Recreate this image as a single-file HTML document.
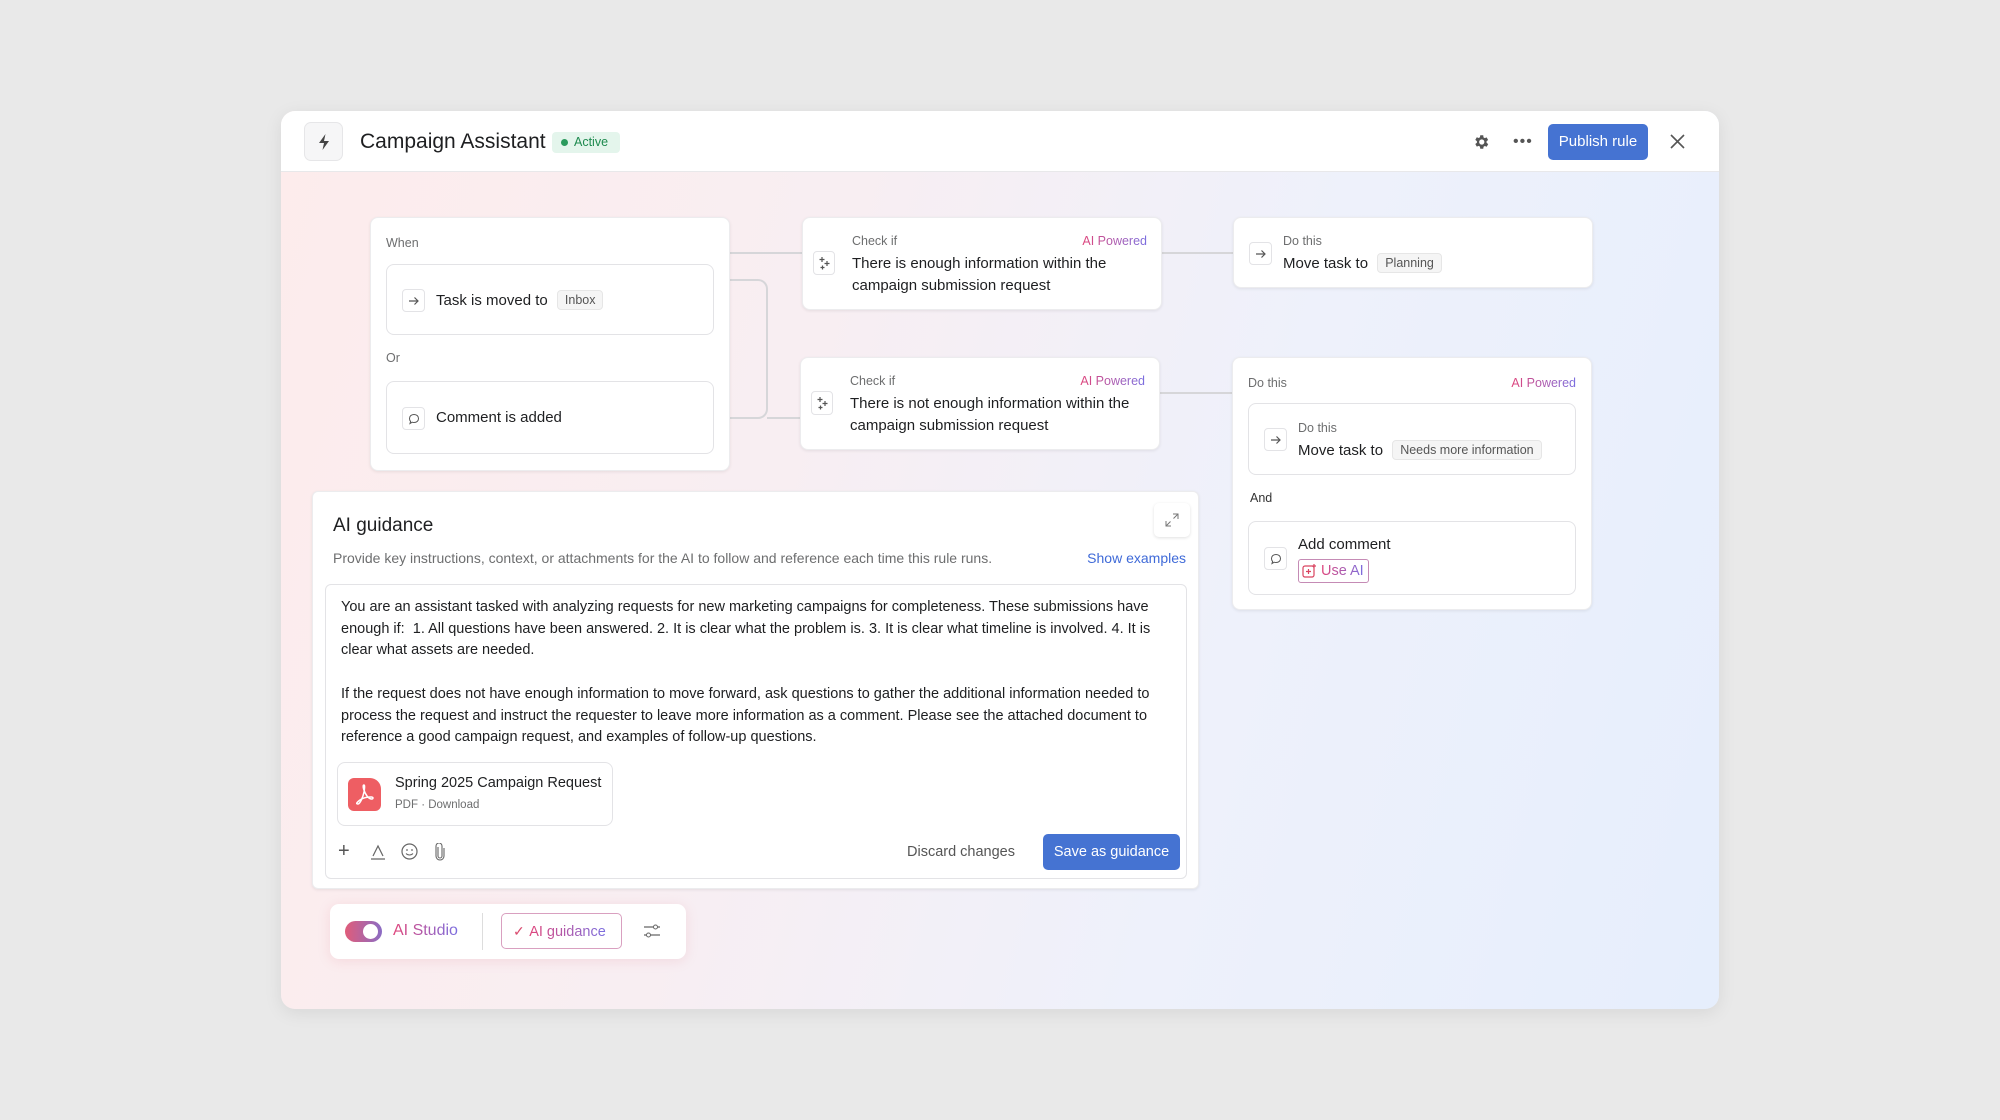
<!DOCTYPE html>
<html><head><meta charset="utf-8"><style>
*{box-sizing:border-box;margin:0;padding:0}
body{width:2000px;height:1120px;background:#e9e9e9;font-family:"Liberation Sans",sans-serif;color:#1e1f21;position:relative;overflow:hidden}
.a{position:absolute}
.main{left:281px;top:111px;width:1438px;height:898px;border-radius:14px;overflow:hidden;background:linear-gradient(105deg,#fdecec 0%,#f8eef2 35%,#eef1fb 65%,#e6eefc 100%);box-shadow:0 4px 18px rgba(0,0,0,.08)}
.hdr{left:0;top:0;width:1438px;height:61px;background:#fff;border-bottom:1px solid #e8e8ea}
.card{background:#fff;border-radius:8px;box-shadow:0 1px 3px rgba(0,0,0,.08);border:1px solid #ececee}
.ib{border:1px solid #e3e3e6;border-radius:8px;background:#fff}
.ico{width:23px;height:23px;border:1px solid #e3e3e6;border-radius:4px;display:flex;align-items:center;justify-content:center;background:#fff}
.lbl{font-size:12.5px;color:#6d6e6f}
.t{font-size:15px;color:#1e1f21}
.chip{display:inline-block;background:#f5f5f5;border:1px solid #e6e6e6;border-radius:4px;font-size:12.5px;color:#555;padding:2px 7px;margin-left:5px;vertical-align:1px}
.aip{font-size:12.5px;background:linear-gradient(90deg,#e0457b,#7a6ee0);-webkit-background-clip:text;color:transparent;white-space:nowrap}
.ln{background:#d6d6d9}
.gt{font-size:14.5px;line-height:21.7px;color:#1e1f21;white-space:nowrap}
</style></head><body>
<div class="a main">
 <div class="a hdr">
  <div class="a" style="left:23px;top:11px;width:39px;height:39px;border:1px solid #e6e6e8;border-radius:7px;background:#f6f6f7;display:flex;align-items:center;justify-content:center">
   <svg width="14" height="18" viewBox="0 0 14 18"><path d="M8.5 1 2 10h5l-1.5 7L12 8H7z" fill="#444"/></svg></div>
  <div class="a" style="left:79px;top:19px;font-size:21px">Campaign Assistant</div>
  <div class="a" style="left:271px;top:21px;width:68px;height:21px;background:#e4f5ec;border-radius:4px;font-size:12.5px;color:#1e8a4f;line-height:21px;padding-left:22px"><span class="a" style="left:9px;top:7px;width:7px;height:7px;border-radius:50%;background:#2a9a5d"></span>Active</div>
  <svg class="a" style="left:1191px;top:22px" width="18" height="18" viewBox="0 0 24 24"><path fill="#555" d="M19.4 13a7.5 7.5 0 0 0 0-2l2.1-1.6-2-3.5-2.5 1a7.5 7.5 0 0 0-1.7-1L15 3h-4l-.4 2.7a7.5 7.5 0 0 0-1.7 1l-2.5-1-2 3.5L6.6 11a7.5 7.5 0 0 0 0 2l-2.2 1.6 2 3.5 2.5-1a7.5 7.5 0 0 0 1.7 1L11 21h4l.4-2.7a7.5 7.5 0 0 0 1.7-1l2.5 1 2-3.5zM13 15.5a3.5 3.5 0 1 1 0-7 3.5 3.5 0 0 1 0 7z"/></svg>
  <div class="a" style="left:1232px;top:28px;font-size:16px;color:#555;letter-spacing:1px;line-height:6px">&bull;&bull;&bull;</div>
  <div class="a" style="left:1267px;top:13px;width:100px;height:36px;background:#4573d2;border-radius:5px;color:#fff;font-size:15px;text-align:center;line-height:36px">Publish rule</div>
  <svg class="a" style="left:1389px;top:23px" width="15" height="15" viewBox="0 0 15 15"><path d="M1 1l13 13M14 1 1 14" stroke="#555" stroke-width="1.6"/></svg>
 </div>

 <div class="a ln" style="left:449px;top:141px;width:72px;height:2px"></div>
 <div class="a" style="left:449px;top:168px;width:38px;height:140px;border:2px solid #d6d6d9;border-left:none;border-radius:0 10px 10px 0"></div>
 <div class="a ln" style="left:486px;top:306px;width:34px;height:2px"></div>
 <div class="a ln" style="left:881px;top:141px;width:72px;height:2px"></div>
 <div class="a ln" style="left:878px;top:281px;width:73px;height:2px"></div>

 <div class="a card" style="left:89px;top:106px;width:360px;height:254px">
  <div class="a lbl" style="left:15px;top:18px">When</div>
  <div class="a ib" style="left:15px;top:46px;width:328px;height:71px">
   <div class="a ico" style="left:15px;top:24px"><svg width="12" height="12" viewBox="0 0 12 12"><path d="M1 6h9M6.5 2.5 10 6 6.5 9.5" stroke="#555" fill="none" stroke-width="1.2"/></svg></div>
   <div class="a t" style="left:49px;top:25px">Task is moved to <span class="chip">Inbox</span></div>
  </div>
  <div class="a lbl" style="left:15px;top:133px">Or</div>
  <div class="a ib" style="left:15px;top:163px;width:328px;height:73px">
   <div class="a ico" style="left:15px;top:25px"><svg width="12" height="12" viewBox="0 0 12 12"><path d="M6 1.5c2.8 0 4.5 1.8 4.5 4s-1.7 4-4.5 4c-.7 0-1.3-.1-1.8-.3L2 10.5l.6-2.1C1.9 7.7 1.5 6.7 1.5 5.5c0-2.2 1.7-4 4.5-4z" stroke="#555" fill="none"/></svg></div>
   <div class="a t" style="left:49px;top:27px">Comment is added</div>
  </div>
 </div>

 <div class="a card" style="left:521px;top:106px;width:360px;height:93px">
  <div class="a ico" style="left:10px;top:33px;width:22px;height:24px"><svg width="14" height="16" viewBox="0 0 14 16"><path d="M5 2v5M2.5 4.5h5M10 6v5M7.5 8.5h5M5.5 10.5v4M3.5 12.5h4" stroke="#555" fill="none" stroke-width="1.2"/></svg></div>
  <div class="a lbl" style="left:49px;top:16px">Check if</div>
  <div class="a aip" style="right:14px;top:16px">AI Powered</div>
  <div class="a t" style="left:49px;top:35px;line-height:22px">There is enough information within the<br>campaign submission request</div>
 </div>
 <div class="a card" style="left:519px;top:246px;width:360px;height:93px">
  <div class="a ico" style="left:10px;top:33px;width:22px;height:24px"><svg width="14" height="16" viewBox="0 0 14 16"><path d="M5 2v5M2.5 4.5h5M10 6v5M7.5 8.5h5M5.5 10.5v4M3.5 12.5h4" stroke="#555" fill="none" stroke-width="1.2"/></svg></div>
  <div class="a lbl" style="left:49px;top:16px">Check if</div>
  <div class="a aip" style="right:14px;top:16px">AI Powered</div>
  <div class="a t" style="left:49px;top:35px;line-height:22px">There is not enough information within the<br>campaign submission request</div>
 </div>

 <div class="a card" style="left:952px;top:106px;width:360px;height:71px">
  <div class="a ico" style="left:15px;top:24px"><svg width="12" height="12" viewBox="0 0 12 12"><path d="M1 6h9M6.5 2.5 10 6 6.5 9.5" stroke="#555" fill="none" stroke-width="1.2"/></svg></div>
  <div class="a lbl" style="left:49px;top:16px">Do this</div>
  <div class="a t" style="left:49px;top:35px">Move task to <span class="chip">Planning</span></div>
 </div>
 <div class="a card" style="left:951px;top:246px;width:360px;height:253px">
  <div class="a lbl" style="left:15px;top:18px">Do this</div>
  <div class="a aip" style="right:15px;top:18px">AI Powered</div>
  <div class="a ib" style="left:15px;top:45px;width:328px;height:72px">
   <div class="a ico" style="left:15px;top:24px"><svg width="12" height="12" viewBox="0 0 12 12"><path d="M1 6h9M6.5 2.5 10 6 6.5 9.5" stroke="#555" fill="none" stroke-width="1.2"/></svg></div>
   <div class="a lbl" style="left:49px;top:17px">Do this</div>
   <div class="a t" style="left:49px;top:36px">Move task to <span class="chip">Needs more information</span></div>
  </div>
  <div class="a" style="left:17px;top:133px;font-size:12.5px;color:#333">And</div>
  <div class="a ib" style="left:15px;top:163px;width:328px;height:74px">
   <div class="a ico" style="left:15px;top:25px"><svg width="12" height="12" viewBox="0 0 12 12"><path d="M6 1.5c2.8 0 4.5 1.8 4.5 4s-1.7 4-4.5 4c-.7 0-1.3-.1-1.8-.3L2 10.5l.6-2.1C1.9 7.7 1.5 6.7 1.5 5.5c0-2.2 1.7-4 4.5-4z" stroke="#555" fill="none"/></svg></div>
   <div class="a t" style="left:49px;top:14px">Add comment</div>
   <div class="a" style="left:49px;top:37px;width:71px;height:24px;border:1px solid #c58bb5;border-radius:3px;font-size:14.5px;line-height:22px;padding-left:22px"><svg class="a" style="left:3px;top:4px" width="15" height="15" viewBox="0 0 15 15"><rect x="1" y="2" width="11" height="11" rx="2" fill="none" stroke="#d9435f" stroke-width="1.2"/><path d="M6.5 5v5M4 7.5h5M12 0v4M10 2h4" stroke="#d9435f" stroke-width="1.2"/></svg><span class="aip" style="font-size:14.5px">Use AI</span></div>
  </div>
 </div>

 <div class="a card" style="left:31px;top:380px;width:887px;height:398px;border-radius:6px">
  <div class="a" style="left:20px;top:23px;font-size:19px">AI guidance</div>
  <div class="a" style="left:841px;top:11px;width:36px;height:34px;border-radius:5px;box-shadow:0 1px 3px rgba(0,0,0,.12);background:#fff"><svg class="a" style="left:11px;top:10px" width="14" height="14" viewBox="0 0 14 14"><path d="M8 1h5v5M13 1 8.5 5.5M6 13H1V8M1 13l4.5-4.5" stroke="#777" fill="none"/></svg></div>
  <div class="a" style="left:20px;top:58px;font-size:14px;color:#6d6e6f">Provide key instructions, context, or attachments for the AI to follow and reference each time this rule runs.</div>
  <div class="a" style="right:12px;top:58px;font-size:14px;color:#3f6ad8">Show examples</div>
  <div class="a ib" style="left:12px;top:92px;width:862px;height:295px;border-radius:6px">
   <div class="a gt" style="left:15px;top:12px">You are an assistant tasked with analyzing requests for new marketing campaigns for completeness. These submissions have<br>enough if:&nbsp; 1. All questions have been answered. 2. It is clear what the problem is. 3. It is clear what timeline is involved. 4. It is<br>clear what assets are needed.<br><br>If the request does not have enough information to move forward, ask questions to gather the additional information needed to<br>process the request and instruct the requester to leave more information as a comment. Please see the attached document to<br>reference a good campaign request, and examples of follow-up questions.</div>
   <div class="a ib" style="left:11px;top:177px;width:276px;height:64px">
    <div class="a" style="left:10px;top:15px;width:33px;height:33px;background:#ee5e63;border-radius:6px 11px 6px 6px"><svg class="a" style="left:6px;top:5px" width="21" height="22" viewBox="0 0 21 22"><path d="M10 2c-2 0 0 7 3 11 2 3 6 4 6 2s-9-1-13 2-4 4-2 4 5-7 6-12c.5-3 1-7 0-7z" stroke="#fff" fill="none" stroke-width="1.5"/></svg></div>
    <div class="a" style="left:57px;top:12px;font-size:14.5px">Spring 2025 Campaign Request</div>
    <div class="a" style="left:57px;top:36px;font-size:11.5px;color:#6d6e6f">PDF · Download</div>
   </div>
   <div class="a" style="left:12px;top:256px;font-size:20px;color:#555;line-height:20px">+</div>
   <svg class="a" style="left:44px;top:259px" width="16" height="16" viewBox="0 0 16 16"><path d="M3 12 8 2l5 10M1 15h14" stroke="#666" fill="none" stroke-width="1.2"/></svg>
   <svg class="a" style="left:75px;top:258px" width="17" height="17" viewBox="0 0 17 17"><circle cx="8.5" cy="8.5" r="7.5" stroke="#666" fill="none" stroke-width="1.2"/><circle cx="6" cy="7" r=".9" fill="#666"/><circle cx="11" cy="7" r=".9" fill="#666"/><path d="M5 10.5c2 2 5 2 7 0" stroke="#666" fill="none"/></svg>
   <svg class="a" style="left:108px;top:258px" width="12" height="18" viewBox="0 0 12 18"><path d="M4 4v9a2 2 0 0 0 4 0V3a3 3 0 0 0-6 0v10a4 4 0 0 0 8 0V5" stroke="#666" fill="none" stroke-width="1.1"/></svg>
   <div class="a" style="left:581px;top:259px;font-size:14.5px;color:#555">Discard changes</div>
   <div class="a" style="left:717px;top:249px;width:137px;height:36px;background:#4573d2;border-radius:5px;color:#fff;font-size:14.5px;text-align:center;line-height:36px">Save as guidance</div>
  </div>
 </div>

 <div class="a" style="left:49px;top:793px;width:356px;height:55px;background:#fff;border-radius:9px;box-shadow:0 2px 12px rgba(220,120,140,.18)">
  <div class="a" style="left:15px;top:17px;width:37px;height:21px;border-radius:11px;background:linear-gradient(90deg,#e05c7a,#8b6cc4)"><div class="a" style="left:18px;top:3px;width:15px;height:15px;border-radius:50%;background:#fff"></div></div>
  <div class="a aip" style="left:63px;top:18px;font-size:16px">AI Studio</div>
  <div class="a" style="left:152px;top:9px;width:1px;height:37px;background:#ddd"></div>
  <div class="a" style="left:171px;top:9px;width:121px;height:36px;border:1px solid #d9a0c0;border-radius:5px;line-height:34px;padding-left:11px;white-space:nowrap"><span style="color:#d94b6f;font-size:14px">✓</span> <span class="aip" style="font-size:14.5px">AI guidance</span></div>
  <svg class="a" style="left:313px;top:18px" width="18" height="18" viewBox="0 0 18 18"><path d="M1 5h10M14 5h3M1 13h3M7 13h10" stroke="#666" fill="none" stroke-width="1.2"/><circle cx="12.5" cy="5" r="2" stroke="#666" fill="none"/><circle cx="5.5" cy="13" r="2" stroke="#666" fill="none"/></svg>
 </div>
</div>
</body></html>
